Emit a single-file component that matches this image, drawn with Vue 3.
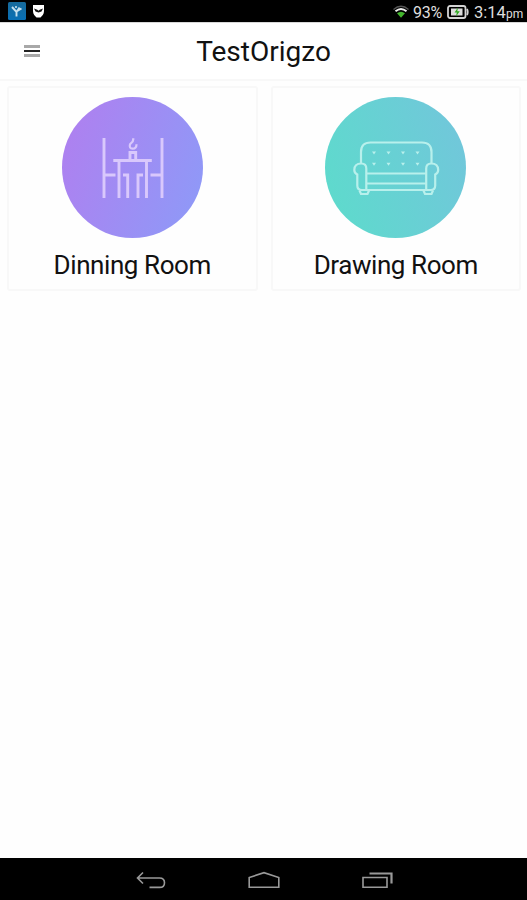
<template>
  <div class="screen">
    <div class="status">
      <div class="status__left">
        <svg class="status__app" viewBox="0 0 18 18">
          <defs>
            <linearGradient id="badge-fill" x1="0" y1="0" x2="0" y2="1">
              <stop offset="0" stop-color="#176a9b" />
              <stop offset="1" stop-color="#0870b6" />
            </linearGradient>
          </defs>
          <rect width="18" height="18" rx="1.5" fill="url(#badge-fill)" />
          <path d="M4 5l4.500 5L11.500 5.500M8.500 14.500V9.500L13.500 6.500" fill="none" stroke="#c5e0ee" stroke-width="1.900" />
          <circle cx="8" cy="5" r="1" fill="#d5e9f2" />
        </svg>
        <svg class="status__mask" viewBox="0 0 11 13">
          <path d="M0 0h11v6c0 3.500-2 5-3.500 6.500h-4C2 11 0 9.500 0 6z" fill="#fff" />
          <path d="M1 3.500l3.300 1.300 1.200 1 1.200-1L10 3.500 8.500 6.500 5.500 7.500 2.500 6.500z" fill="#111" />
        </svg>
      </div>
      <div class="status__right">
        <svg class="status__wifi" viewBox="0 0 16 13">
          <path d="M0.500 4.500Q8-2 15.500 4.500" fill="none" stroke="#555" stroke-width="1.300" />
          <path d="M2.500 6.300Q8 1.500 13.500 6.300" fill="none" stroke="#eee" stroke-width="1.900" />
          <path d="M4 8.300Q8 5.300 12 8.300L8 12.700z" fill="#43b52d" />
        </svg>
        <span class="status__percent">93%</span>
        <svg class="status__battery" viewBox="0 0 22 14">
          <rect x="1" y="1" width="17.500" height="12" rx="2" fill="none" stroke="#d4d4d4" stroke-width="1.800" />
          <path d="M20 4q1.500 3 0 6" fill="none" stroke="#d4d4d4" stroke-width="1.800" />
          <rect x="4" y="3.500" width="11.500" height="7" fill="#ddd" />
          <path d="M11 2.500L7.500 7.500h2.300L9 11.500l3.800-5.300h-2.500z" fill="#2faa20" />
        </svg>
        <span class="status__time">3:14</span>
        <span class="status__pm">pm</span>
      </div>
    </div>

    <header class="header">
      <div class="header__menu">
        <i></i>
        <i></i>
        <i></i>
      </div>
      <h1 class="header__title">TestOrigzo</h1>
    </header>

    <main class="rooms">
      <div v-for="room in rooms" :key="room.id" class="room" @click="selected = room.id">
        <div class="room__icon" :class="'room__icon--' + room.id">
          <svg v-if="room.id === 'dinning'" viewBox="0 0 141 141">
            <g class="room__thick">
              <path d="M42 41v60M100 41v60" />
              <path d="M42 78h11.500M88.500 78H100" />
              <path d="M51.300 63.500h38.500M57 64v37M84.500 64v37" />
              <path d="M61 78h4.700v23M81 78h-5v23" />
              <path d="M68 63v-7.500h5.700V63" />
            </g>
            <path d="M71.500 41.200l-.8 3.300-2.700 2.700q-1.200 4.300 2.700 4.500 3.800-.2 3.800-4.500" stroke-width="2.200" />
          </svg>
          <svg v-else viewBox="0 0 141 141">
            <path d="M36 66V55q0-9.500 9.500-9.500h51.500q9.500 0 9.500 9.500v11" />
            <path d="M41.300 92V71.500q0-5-5-5-7 0-7 6.500 0 3 3 4.500v11q0 4.500 4.500 4.500h68.900q4.500 0 4.500-4.500v-11q3-1.500 3-4.500 0-6.500-7-6.500-5 0-5 5V92" />
            <path d="M41.300 76.500h59.900M41.300 86.500h59.900" />
            <path d="M34.500 93.500l1.500 3.500h6.500l1.500-3.500M98.500 93.500l1.500 3.500h6.500l1.500-3.500" />
            <template v-for="y in [55.500, 66.700]" :key="y">
              <path v-for="x in [49, 63.500, 78, 92.500]" :key="x" class="room__button" :d="`M${x - 2} ${y - 1}h4l-2 3z`" />
            </template>
          </svg>
        </div>
        <div class="room__name">{{ room.name }}</div>
      </div>
    </main>

    <nav class="nav">
      <svg viewBox="0 0 32 20">
        <path d="M8 2.500L2.500 8 8 13.500M2.500 8h22q5 0 5 4.700t-5 4.700H14.500" />
      </svg>
      <svg viewBox="0 0 32 20">
        <path d="M1.200 17.200V7.500L16 2.700l14.800 4.800v9.700z" />
      </svg>
      <svg viewBox="0 0 32 20">
        <path d="M2 7.500h24v9.700H2z" />
        <path d="M8.500 3.500H30.500V13.500" stroke-width="2.200" />
      </svg>
    </nav>
  </div>
</template>

<script setup>
import { ref } from "vue";

const rooms = [
  { id: "dinning", name: "Dinning Room" },
  { id: "drawing", name: "Drawing Room" },
];

const selected = ref(null);
</script>

<style>
body {
  margin: 0;
  background: #fff;
}
</style>

<style scoped>
.screen {
  display: flex;
  flex-direction: column;
  height: 900px;
  background: #fefefe;
  color: #111;
  font-family: Roboto, sans-serif;
  overflow: hidden;
}
svg {
  display: block;
  flex: none;
}
.status {
  display: flex;
  justify-content: space-between;
  height: 22px;
  background: #000;
  color: #dedede;
}
.status__left,
.status__right {
  display: flex;
}
.status__left {
  padding: 2px 0 0 8px;
  gap: 7px;
}
.status__app {
  width: 18px;
  height: 18px;
}
.status__mask {
  width: 11px;
  height: 13px;
  margin-top: 3px;
}
.status__right {
  padding-right: 4px;
  line-height: 25px;
  white-space: nowrap;
}
.status__wifi {
  width: 16px;
  height: 13px;
  margin: 5px 4px 0 0;
}
.status__percent {
  width: 30px;
  font-size: 16px;
  letter-spacing: -0.2px;
}
.status__battery {
  width: 22px;
  height: 14px;
  margin: 5px 5px 0 4px;
}
.status__time {
  width: 32px;
  font-size: 16.5px;
}
.status__pm {
  width: 17px;
  font-size: 12px;
  line-height: 28px;
}
.header {
  display: grid;
  grid-template-columns: 60px 1fr 60px;
  height: 56px;
  border-top: 1px solid #d8d8d8;
  border-bottom: 2px solid #f8f8f8;
  box-sizing: content-box;
  background: #fff;
}
.header__menu {
  display: flex;
  flex-direction: column;
  gap: 2px;
  padding: 22px 0 0 24px;
}
.header__menu i {
  width: 16px;
  height: 3px;
  background: #a8a8a8;
}
.header__menu i:nth-child(2) {
  height: 2px;
  background: #222;
}
.header__title {
  margin: 0;
  font-size: 28px;
  font-weight: 400;
  line-height: 58px;
  text-align: center;
}
.rooms {
  display: grid;
  grid-template-columns: 1fr 1fr;
  gap: 13px;
  flex: 1;
  align-items: start;
  padding: 5px 6px 0 7px;
}
.room {
  display: flex;
  flex-direction: column;
  align-items: center;
  height: 205px;
  box-sizing: border-box;
  border: 2px solid #f8f8f8;
  border-radius: 3px;
  padding-top: 9px;
}
.room__icon {
  width: 141px;
  height: 141px;
  border-radius: 50%;
}
.room__icon svg {
  width: 141px;
  height: 141px;
  fill: none;
  stroke: #b8f0ec;
  stroke-width: 2.2;
}
.room__icon--dinning {
  background: linear-gradient(110deg, #b17eef, #8c9bf8);
}
.room__icon--drawing {
  background: linear-gradient(70deg, #5cdccb, #73c5dc);
}
.room__icon--dinning svg {
  stroke: #d9c8fc;
}
.room__icon .room__thick {
  stroke-width: 2.9;
}
.room__icon .room__button {
  fill: #b8f0ec;
  stroke: none;
}
.room__name {
  font-size: 26px;
  letter-spacing: -0.42px;
  line-height: 30px;
  margin-top: 12px;
  white-space: nowrap;
}
.nav {
  display: flex;
  justify-content: center;
  gap: 81px;
  height: 42px;
  padding-top: 12px;
  box-sizing: border-box;
  background: #000;
}
.nav svg {
  width: 32px;
  height: 20px;
  fill: none;
  stroke: #999;
  stroke-width: 1.6;
}
</style>
